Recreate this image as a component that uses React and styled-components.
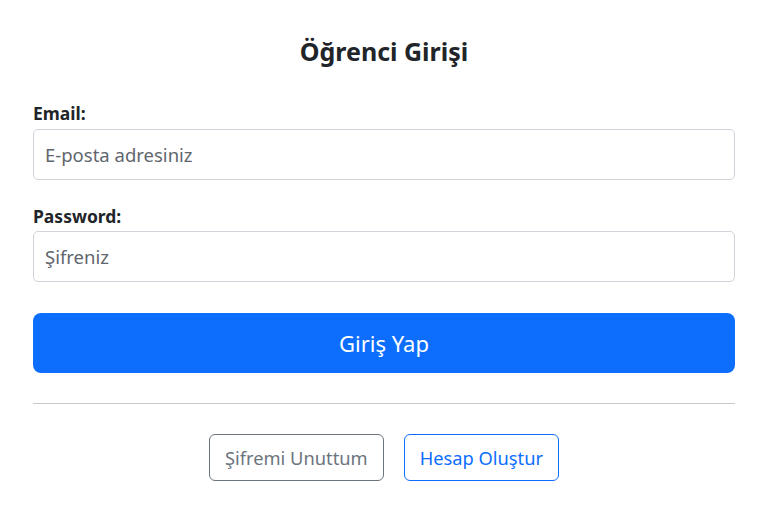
import React from 'react';
import styled, { createGlobalStyle } from 'styled-components';

const GlobalStyle = createGlobalStyle`
  * { box-sizing: border-box; }
  body {
    margin: 0;
    background: #fff;
    font-family: "Noto Sans", "Open Sans", sans-serif;
    color: #212529;
  }
`;

const Page = styled.div`
  padding: 33px 35px 0 33px;
`;

const Title = styled.h3`
  margin: 0 0 32px;
  font-size: 25px;
  line-height: 36px;
  font-weight: 700;
  text-align: center;
`;

const Field = styled.div`
  display: flex;
  flex-direction: column;
  margin-bottom: ${props => props.last ? '31px' : '24px'};
`;

const Label = styled.label`
  font-size: 17.5px;
  font-weight: 700;
  line-height: 24px;
  margin-bottom: ${props => props.gap || '4px'};
`;

const Input = styled.input`
  height: 51px;
  padding: 0 11px;
  border: 1px solid #ced4da;
  border-radius: 5px;
  font-family: inherit;
  font-size: 18.5px;
  color: #212529;
  outline: none;

  &::placeholder {
    color: #5f666d;
  }
`;

const SubmitButton = styled.button`
  width: 100%;
  height: 60px;
  border: none;
  border-radius: 8px;
  background: #0d6efd;
  color: #fff;
  font-family: inherit;
  font-size: 22px;
  cursor: pointer;
`;

const Divider = styled.hr`
  margin: 30px 0 30px;
  border: none;
  border-top: 1px solid #c8c8c8;
`;

const Actions = styled.div`
  display: flex;
  justify-content: center;
  gap: 20px;
`;

const OutlineButton = styled.button`
  height: 47px;
  padding: 0 15px;
  background: #fff;
  border: 1px solid ${props => props.primary ? '#0d6efd' : '#6c757d'};
  color: ${props => props.primary ? '#0d6efd' : '#6c757d'};
  border-radius: 6px;
  font-family: inherit;
  font-size: 18.3px;
  cursor: pointer;
`;

export default function App() {
  return (
    <>
      <GlobalStyle />
      <Page>
        <Title>Öğrenci Girişi</Title>
        <Field>
          <Label>Email:</Label>
          <Input type="email" placeholder="E-posta adresiniz" />
        </Field>
        <Field last>
          <Label gap="3px">Password:</Label>
          <Input type="password" placeholder="Şifreniz" />
        </Field>
        <SubmitButton>Giriş Yap</SubmitButton>
        <Divider />
        <Actions>
          <OutlineButton>Şifremi Unuttum</OutlineButton>
          <OutlineButton primary>Hesap Oluştur</OutlineButton>
        </Actions>
      </Page>
    </>
  );
}
